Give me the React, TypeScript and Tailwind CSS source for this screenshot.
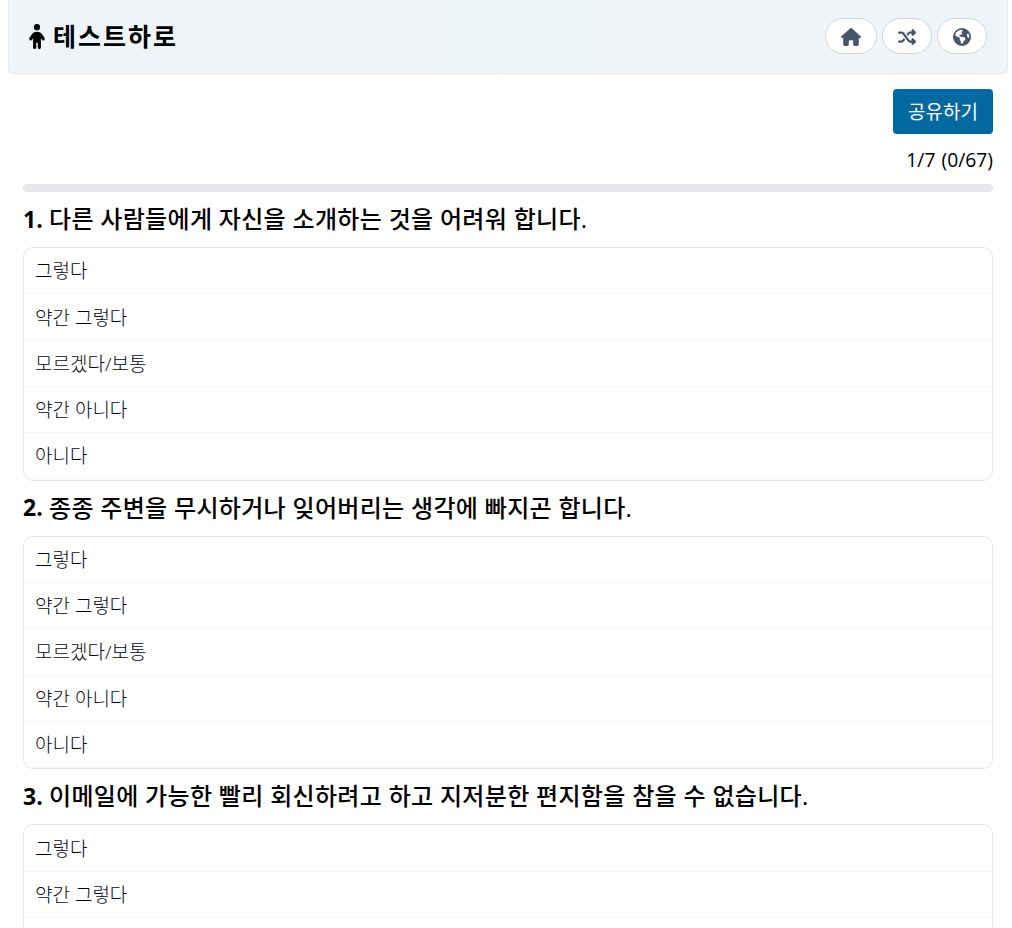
import { FaChild, FaEarthAmericas, FaHouse, FaShuffle } from "react-icons/fa6";

const answers = ["그렇다", "약간 그렇다", "모르겠다/보통", "약간 아니다", "아니다"];

const questions = [
  "다른 사람들에게 자신을 소개하는 것을 어려워 합니다.",
  "종종 주변을 무시하거나 잊어버리는 생각에 빠지곤 합니다.",
  "이메일에 가능한 빨리 회신하려고 하고 지저분한 편지함을 참을 수 없습니다."
];

function Header() {
  return (
    <header className="mx-2 mr-1 flex h-[74px] items-center justify-between rounded-b-md border border-t-0 border-gray-200 bg-linear-to-r from-[#eff4f8] via-[#eef5f9] to-[#eff4f8] pr-5 pb-[2px] pl-[19px]">
      <a href="#" className="flex items-center text-black">
        <FaChild className="mt-[2px] h-[25px] w-[18px]" />
        <span className="ml-[7px] text-[25px] leading-9 font-bold tracking-[0.08em]">테스트하로</span>
      </a>
      <nav className="flex gap-[5px] text-slate-600">
        <a href="#" className="flex h-9 w-[52px] items-center justify-center rounded-full border border-gray-300 bg-white pt-[2px]">
          <FaHouse className="size-5" />
        </a>
        <a href="#" className="flex h-9 w-[50px] items-center justify-center rounded-full border border-gray-300 bg-white pt-[2px]">
          <FaShuffle className="size-[18px]" />
        </a>
        <a href="#" className="flex h-9 w-[50px] items-center justify-center rounded-full border border-gray-300 bg-white pt-[2px]">
          <FaEarthAmericas className="size-[18px]" />
        </a>
      </nav>
    </header>
  );
}

function Question({ number, title }: { number: number; title: string }) {
  return (
    <section>
      <h2 className="flex h-[54.95px] items-center pb-[1.5px] text-2xl font-medium tracking-[0.31px] whitespace-nowrap">
        <span className="w-[26px] text-[23px] font-bold tracking-normal">{number}.</span>
        {title}
      </h2>
      <ul className="rounded-[10px] border border-gray-200 pb-[0.4px]">
        {answers.map((answer) => (
          <li
            key={answer}
            className="flex h-[46.25px] items-center border-b border-gray-100 pt-[1.5px] pl-[11px] text-[19px] font-light text-gray-950"
          >
            {answer}
          </li>
        ))}
      </ul>
    </section>
  );
}

export default function App() {
  return (
    <div className="h-[928px] overflow-hidden bg-white font-['Open_Sans','Noto_Sans_CJK_KR',sans-serif] text-black">
      <Header />
      <main className="mr-[19px] ml-[23px]">
        <div className="flex flex-col items-end pt-[15px]">
          <button className="h-[45px] w-[100px] rounded bg-[#0369a1] pt-[2px] text-[19px] text-white">공유하기</button>
          <p className="mt-[11px] h-[31px] text-[19.3px] leading-[30px] [word-spacing:1px]">1/7 (0/67)</p>
        </div>
        <div className="mt-2 mb-[0.3px] h-2 rounded-full bg-gray-200" />
        {questions.map((title, index) => (
          <Question key={title} number={index + 1} title={title} />
        ))}
      </main>
    </div>
  );
}
